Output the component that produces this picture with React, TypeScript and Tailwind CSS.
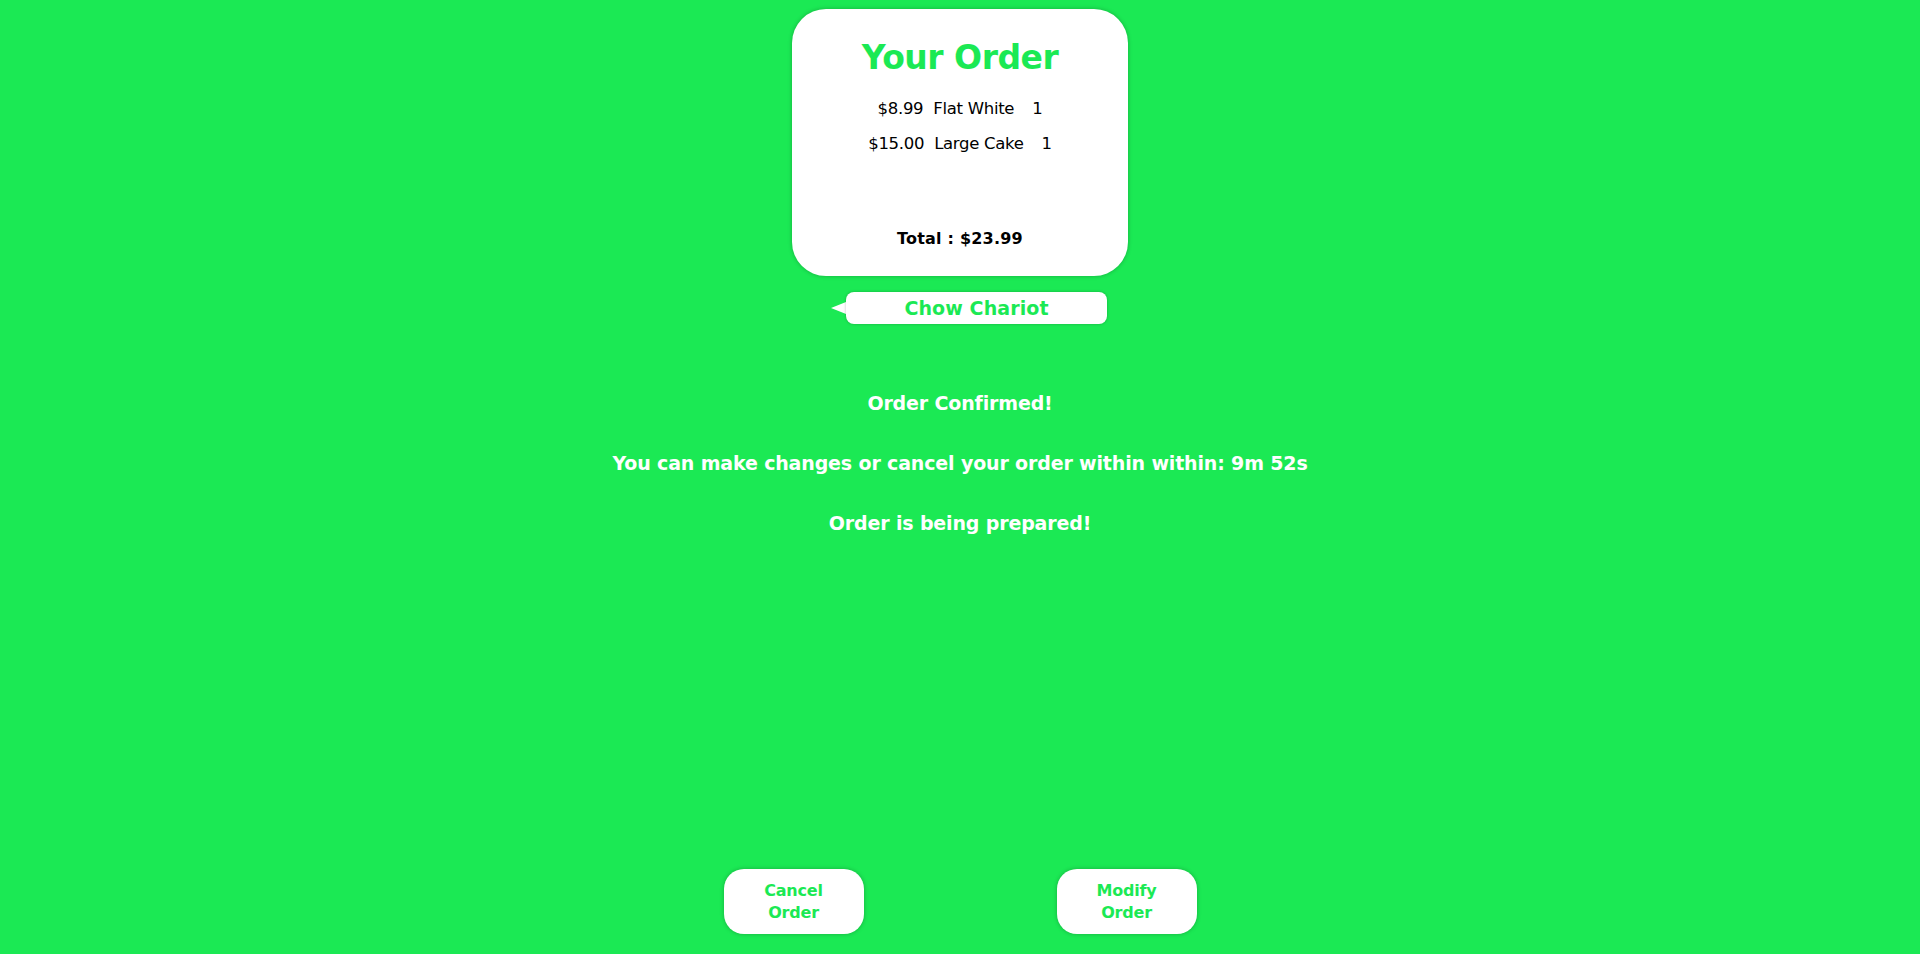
import React from "react";

const font = { fontFamily: "'DejaVu Sans', Verdana, sans-serif" };

export default function App() {
  return (
    <div
      className="h-[954px] w-full bg-[#1be954] flex flex-col items-center overflow-hidden"
      style={font}
    >
      <div className="mt-[9px] w-[336px] h-[267px] rounded-[34px] bg-white shadow-[0_0_4px_rgba(0,0,0,0.25)] flex flex-col items-center">
        <h1 className="mt-[29px] text-[33px] leading-[40px] font-bold text-[#1be954] tracking-[-0.5px]">
          Your Order
        </h1>
        <div className="mt-[21px] flex flex-col items-center gap-[15px] text-[16.5px] leading-[20px] text-black tracking-[-0.3px]">
          <div className="flex gap-[10px]">
            <span>$8.99</span>
            <span className="pr-[8px]">Flat White</span>
            <span>1</span>
          </div>
          <div className="flex gap-[10px]">
            <span>$15.00</span>
            <span className="pr-[8px]">Large Cake</span>
            <span>1</span>
          </div>
        </div>
        <div className="mt-auto mb-[27px] text-[16px] leading-[20px] font-bold text-black tracking-[0.2px]">
          Total : $23.99
        </div>
      </div>

      <div className="mt-[16px] ml-[18px] flex items-center">
        <div className="w-0 h-0 border-y-[6px] border-y-transparent border-r-[15px] border-r-white" />
        <div className="w-[261px] h-[32px] rounded-[8px] bg-white shadow-[0_0_3px_rgba(0,0,0,0.25)] flex items-center justify-center text-[19px] font-bold text-[#1be954] tracking-[0.1px]">
          Chow Chariot
        </div>
      </div>

      <div className="mt-[68px] flex flex-col items-center gap-[38px] text-white font-bold text-[19px] leading-[22px] tracking-[-0.15px]">
        <p>Order Confirmed!</p>
        <p>You can make changes or cancel your order within within: 9m 52s</p>
        <p>Order is being prepared!</p>
      </div>

      <div className="mt-auto mb-[20px] flex gap-[193px]">
        <button className="w-[140px] h-[65px] rounded-[20px] bg-white shadow-[0_0_4px_rgba(0,0,0,0.25)] text-[#1be954] font-bold text-[16px] leading-[22px] tracking-[-0.2px]">
          Cancel
          <br />
          Order
        </button>
        <button className="w-[140px] h-[65px] rounded-[20px] bg-white shadow-[0_0_4px_rgba(0,0,0,0.25)] text-[#1be954] font-bold text-[16px] leading-[22px] tracking-[-0.2px]">
          Modify
          <br />
          Order
        </button>
      </div>
    </div>
  );
}
